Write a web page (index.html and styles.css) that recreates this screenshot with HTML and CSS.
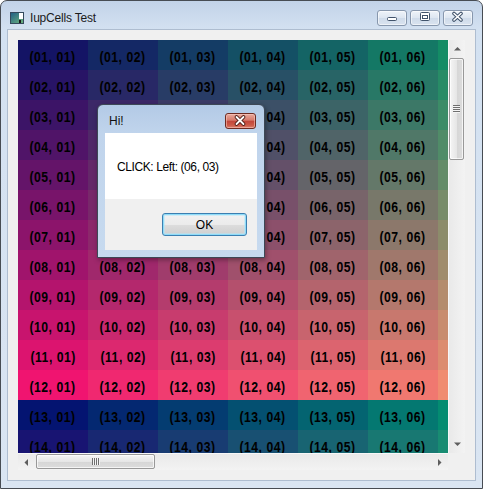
FILE: index.html
```html
<!DOCTYPE html>
<html>
<head>
<meta charset="utf-8">
<link rel="stylesheet" href="styles.css">
</head>
<body>
<div class="window">
  <div class="titlebar">
    <svg class="appicon" width="14" height="12" viewBox="0 0 14 12">
      <defs>
        <linearGradient id="ig" x1="0" y1="0" x2="1" y2="1">
          <stop offset="0" stop-color="#1f5d86"/>
          <stop offset="1" stop-color="#6fb67c"/>
        </linearGradient>
      </defs>
      <rect x="0.5" y="0.5" width="13" height="11" fill="url(#ig)" stroke="#34495c"/>
      <rect x="9" y="1" width="4" height="6" fill="#ffffff"/>
      <rect x="9" y="8" width="2" height="3" fill="#1a1a1a"/>
    </svg>
    <span class="title">IupCells Test</span>
    <div class="caption-buttons">
      <div class="cbtn">
        <svg width="28" height="14" viewBox="0 0 28 14"><rect x="9.5" y="6.5" width="9" height="3" rx="1" fill="#fff" stroke="#41536b"/></svg>
      </div>
      <div class="cbtn">
        <svg width="28" height="14" viewBox="0 0 28 14"><rect x="9.5" y="1.5" width="9" height="8" rx="1" fill="#fff" stroke="#41536b"/><rect x="11.5" y="4.5" width="5" height="3" fill="none" stroke="#41536b"/></svg>
      </div>
      <div class="cbtn">
        <svg width="28" height="14" viewBox="0 0 28 14"><path d="M10 2.5 L17 9 M17 2.5 L10 9" stroke="#41536b" stroke-width="3.6" stroke-linecap="round"/><path d="M10 2.5 L17 9 M17 2.5 L10 9" stroke="#fff" stroke-width="1.6" stroke-linecap="round"/></svg>
      </div>
    </div>
  </div>
  <div class="client">
    <div class="cells">
      <div class="grid-view">
        <div class="row r1"><div class="cell c1"><span>(01, 01)</span></div><div class="cell c2"><span>(01, 02)</span></div><div class="cell c3"><span>(01, 03)</span></div><div class="cell c4"><span>(01, 04)</span></div><div class="cell c5"><span>(01, 05)</span></div><div class="cell c6"><span>(01, 06)</span></div><div class="cell c7"><span>(01, 07)</span></div></div>
        <div class="row r2"><div class="cell c1"><span>(02, 01)</span></div><div class="cell c2"><span>(02, 02)</span></div><div class="cell c3"><span>(02, 03)</span></div><div class="cell c4"><span>(02, 04)</span></div><div class="cell c5"><span>(02, 05)</span></div><div class="cell c6"><span>(02, 06)</span></div><div class="cell c7"><span>(02, 07)</span></div></div>
        <div class="row r3"><div class="cell c1"><span>(03, 01)</span></div><div class="cell c2"><span>(03, 02)</span></div><div class="cell c3"><span>(03, 03)</span></div><div class="cell c4"><span>(03, 04)</span></div><div class="cell c5"><span>(03, 05)</span></div><div class="cell c6"><span>(03, 06)</span></div><div class="cell c7"><span>(03, 07)</span></div></div>
        <div class="row r4"><div class="cell c1"><span>(04, 01)</span></div><div class="cell c2"><span>(04, 02)</span></div><div class="cell c3"><span>(04, 03)</span></div><div class="cell c4"><span>(04, 04)</span></div><div class="cell c5"><span>(04, 05)</span></div><div class="cell c6"><span>(04, 06)</span></div><div class="cell c7"><span>(04, 07)</span></div></div>
        <div class="row r5"><div class="cell c1"><span>(05, 01)</span></div><div class="cell c2"><span>(05, 02)</span></div><div class="cell c3"><span>(05, 03)</span></div><div class="cell c4"><span>(05, 04)</span></div><div class="cell c5"><span>(05, 05)</span></div><div class="cell c6"><span>(05, 06)</span></div><div class="cell c7"><span>(05, 07)</span></div></div>
        <div class="row r6"><div class="cell c1"><span>(06, 01)</span></div><div class="cell c2"><span>(06, 02)</span></div><div class="cell c3"><span>(06, 03)</span></div><div class="cell c4"><span>(06, 04)</span></div><div class="cell c5"><span>(06, 05)</span></div><div class="cell c6"><span>(06, 06)</span></div><div class="cell c7"><span>(06, 07)</span></div></div>
        <div class="row r7"><div class="cell c1"><span>(07, 01)</span></div><div class="cell c2"><span>(07, 02)</span></div><div class="cell c3"><span>(07, 03)</span></div><div class="cell c4"><span>(07, 04)</span></div><div class="cell c5"><span>(07, 05)</span></div><div class="cell c6"><span>(07, 06)</span></div><div class="cell c7"><span>(07, 07)</span></div></div>
        <div class="row r8"><div class="cell c1"><span>(08, 01)</span></div><div class="cell c2"><span>(08, 02)</span></div><div class="cell c3"><span>(08, 03)</span></div><div class="cell c4"><span>(08, 04)</span></div><div class="cell c5"><span>(08, 05)</span></div><div class="cell c6"><span>(08, 06)</span></div><div class="cell c7"><span>(08, 07)</span></div></div>
        <div class="row r9"><div class="cell c1"><span>(09, 01)</span></div><div class="cell c2"><span>(09, 02)</span></div><div class="cell c3"><span>(09, 03)</span></div><div class="cell c4"><span>(09, 04)</span></div><div class="cell c5"><span>(09, 05)</span></div><div class="cell c6"><span>(09, 06)</span></div><div class="cell c7"><span>(09, 07)</span></div></div>
        <div class="row r10"><div class="cell c1"><span>(10, 01)</span></div><div class="cell c2"><span>(10, 02)</span></div><div class="cell c3"><span>(10, 03)</span></div><div class="cell c4"><span>(10, 04)</span></div><div class="cell c5"><span>(10, 05)</span></div><div class="cell c6"><span>(10, 06)</span></div><div class="cell c7"><span>(10, 07)</span></div></div>
        <div class="row r11"><div class="cell c1"><span>(11, 01)</span></div><div class="cell c2"><span>(11, 02)</span></div><div class="cell c3"><span>(11, 03)</span></div><div class="cell c4"><span>(11, 04)</span></div><div class="cell c5"><span>(11, 05)</span></div><div class="cell c6"><span>(11, 06)</span></div><div class="cell c7"><span>(11, 07)</span></div></div>
        <div class="row r12"><div class="cell c1"><span>(12, 01)</span></div><div class="cell c2"><span>(12, 02)</span></div><div class="cell c3"><span>(12, 03)</span></div><div class="cell c4"><span>(12, 04)</span></div><div class="cell c5"><span>(12, 05)</span></div><div class="cell c6"><span>(12, 06)</span></div><div class="cell c7"><span>(12, 07)</span></div></div>
        <div class="row r13"><div class="cell c1"><span>(13, 01)</span></div><div class="cell c2"><span>(13, 02)</span></div><div class="cell c3"><span>(13, 03)</span></div><div class="cell c4"><span>(13, 04)</span></div><div class="cell c5"><span>(13, 05)</span></div><div class="cell c6"><span>(13, 06)</span></div><div class="cell c7"><span>(13, 07)</span></div></div>
        <div class="row r14"><div class="cell c1"><span>(14, 01)</span></div><div class="cell c2"><span>(14, 02)</span></div><div class="cell c3"><span>(14, 03)</span></div><div class="cell c4"><span>(14, 04)</span></div><div class="cell c5"><span>(14, 05)</span></div><div class="cell c6"><span>(14, 06)</span></div><div class="cell c7"><span>(14, 07)</span></div></div>
      </div>
      <div class="vscroll">
        <div class="sarrow"><svg width="17" height="17" viewBox="0 0 17 17"><polygon points="5,10.5 12,10.5 8.5,7" fill="#5e5e5e"/></svg></div>
        <div class="vthumb"><span class="grip-v"></span></div>
        <div class="strack"></div>
        <div class="sarrow"><svg width="17" height="17" viewBox="0 0 17 17"><polygon points="5,6.5 12,6.5 8.5,10" fill="#5e5e5e"/></svg></div>
      </div>
      <div class="hscroll">
        <div class="sarrow"><svg width="17" height="17" viewBox="0 0 17 17"><polygon points="10,5 10,12 6.5,8.5" fill="#5e5e5e"/></svg></div>
        <div class="hthumb"><span class="grip-h"></span></div>
        <div class="strack"></div>
        <div class="sarrow"><svg width="17" height="17" viewBox="0 0 17 17"><polygon points="7,5 7,12 10.5,8.5" fill="#5e5e5e"/></svg></div>
      </div>
      <div class="corner"></div>
    </div>
  </div>

  <div class="dialog">
    <div class="dtitlebar">
      <span class="dtitle">Hi!</span>
      <div class="dclose">
        <svg width="29" height="14" viewBox="0 0 29 14"><path d="M10.5 3 L17.5 10 M17.5 3 L10.5 10" stroke="#4a1a14" stroke-width="3.8" stroke-linecap="round"/><path d="M10.5 3 L17.5 10 M17.5 3 L10.5 10" stroke="#fff" stroke-width="1.8" stroke-linecap="round"/></svg>
      </div>
    </div>
    <div class="dclient">
      <div class="dmessage">CLICK: Left: (06, 03)</div>
      <div class="dfooter">
        <div class="okbtn">OK</div>
      </div>
    </div>
  </div>
</div>
</body>
</html>
```
FILE: styles.css
```css
* {
  box-sizing: border-box;
  margin: 0;
  padding: 0;
}

html, body {
  width: 483px;
  height: 489px;
  overflow: hidden;
  background: #ffffff;
}

body {
  font-family: "Liberation Sans", Arial, sans-serif;
}

.window {
  position: relative;
  width: 483px;
  height: 489px;
  border: 1px solid #474c53;
  border-radius: 7px 7px 0 0;
  background: linear-gradient(#c2d3e8, #d3e1f1 28px, #dae5f2);
  padding: 0 6px 7px;
  display: flex;
  flex-direction: column;
}

.titlebar {
  height: 28px;
  flex: none;
  display: flex;
  align-items: center;
  padding: 6px 3px 0 3px;
}

.appicon {
  flex: none;
  display: block;
}

.title {
  margin-left: 6px;
  font-size: 12px;
  letter-spacing: -0.2px;
  color: #1b1b1b;
}

.caption-buttons {
  margin-left: auto;
  display: flex;
  gap: 3px;
}

.cbtn {
  width: 30px;
  height: 16px;
  border: 1px solid #8797ad;
  border-radius: 3px;
  background: linear-gradient(#eef3f9, #dde6f1 50%, #cfdbea 51%, #d9e3ef);
  box-shadow: inset 0 0 0 1px rgba(255, 255, 255, 0.55);
}

.cbtn svg {
  display: block;
}

.client {
  flex: 1;
  background: #f0f0f0;
  border: 1px solid #aebdd0;
  padding: 10px;
}

.cells {
  display: grid;
  grid-template-columns: 430px 17px;
  grid-template-rows: 413px 17px;
  width: 447px;
  height: 430px;
}

.grid-view {
  overflow: hidden;
  display: flex;
  flex-direction: column;
}

.row {
  display: flex;
  flex: none;
  height: 30px;
}

.cell {
  flex: none;
  width: 70px;
  height: 30px;
  display: flex;
  align-items: center;
  justify-content: center;
  padding-top: 3px;
  font-weight: bold;
  font-size: 14px;
  letter-spacing: 0.6px;
  color: #000;
  white-space: nowrap;
  background: rgb(var(--r), var(--g), var(--b));
}

.cell span {
  display: inline-block;
  transform: scaleX(0.87);
}

.r1 { --r: 20; --b: 101; }
.r2 { --r: 40; --b: 102; }
.r3 { --r: 60; --b: 103; }
.r4 { --r: 80; --b: 104; }
.r5 { --r: 100; --b: 105; }
.r6 { --r: 120; --b: 106; }
.r7 { --r: 140; --b: 107; }
.r8 { --r: 160; --b: 108; }
.r9 { --r: 180; --b: 109; }
.r10 { --r: 200; --b: 110; }
.r11 { --r: 220; --b: 111; }
.r12 { --r: 240; --b: 112; }
.r13 { --r: 4; --b: 113; }
.r14 { --r: 24; --b: 114; }

.c1 { --g: 20; }
.c2 { --g: 40; }
.c3 { --g: 60; }
.c4 { --g: 80; }
.c5 { --g: 100; }
.c6 { --g: 120; }
.c7 { --g: 140; }

.vscroll {
  display: flex;
  flex-direction: column;
  background: linear-gradient(to right, #e9e9e9, #f3f3f3);
  border-left: 1px solid #f7f7f7;
}

.hscroll {
  display: flex;
  flex-direction: row;
  background: linear-gradient(#e9e9e9, #f3f3f3);
  border-top: 1px solid #f7f7f7;
}

.sarrow {
  flex: none;
  width: 17px;
  height: 17px;
}

.vscroll .sarrow {
  width: 16px;
}

.hscroll .sarrow {
  height: 16px;
}

.sarrow svg {
  display: block;
}

.strack {
  flex: 1;
}

.vthumb {
  flex: none;
  height: 102px;
  width: 15px;
  margin: 1px 0 0 0;
  border: 1px solid #989898;
  border-radius: 2px;
  background: linear-gradient(to right, #f5f5f5, #e6e6e6 50%, #d6d6d6 51%, #dcdcdc);
  box-shadow: inset 0 0 0 1px rgba(255, 255, 255, 0.7);
  display: flex;
  align-items: center;
  justify-content: center;
}

.hthumb {
  flex: none;
  width: 119px;
  height: 15px;
  margin: 0 0 0 1px;
  border: 1px solid #989898;
  border-radius: 2px;
  background: linear-gradient(#f5f5f5, #e6e6e6 50%, #d6d6d6 51%, #dcdcdc);
  box-shadow: inset 0 0 0 1px rgba(255, 255, 255, 0.7);
  display: flex;
  align-items: center;
  justify-content: center;
}

.grip-v {
  display: block;
  width: 7px;
  height: 8px;
  background: repeating-linear-gradient(#6f6f6f 0 1px, #f4f4f4 1px 2px);
}

.grip-h {
  display: block;
  width: 8px;
  height: 7px;
  background: repeating-linear-gradient(to right, #6f6f6f 0 1px, #f4f4f4 1px 2px);
}

.corner {
  background: #f0f0f0;
}

.dialog {
  position: absolute;
  left: 96px;
  top: 103px;
  width: 168px;
  height: 154px;
  border: 1px solid #3d4856;
  border-radius: 6px 6px 0 0;
  background: linear-gradient(#b3cae6, #c0d4ec 28px, #c7daef);
  box-shadow: 1px 2px 5px rgba(0, 0, 0, 0.35);
  padding: 0 7px 7px;
  display: flex;
  flex-direction: column;
}

.dtitlebar {
  height: 28px;
  flex: none;
  display: flex;
  align-items: center;
  padding: 4px 1px 0 4px;
}

.dtitle {
  font-size: 12px;
  color: #111;
}

.dclose {
  margin-left: auto;
  width: 31px;
  height: 16px;
  border: 1px solid #6e2b22;
  border-radius: 3px;
  background: linear-gradient(#e8aa9e, #d77a6b 45%, #c2453a 50%, #cc5a48 80%, #d88070);
  box-shadow: inset 0 0 0 1px rgba(255, 210, 200, 0.5);
}

.dclose svg {
  display: block;
}

.dclient {
  flex: 1;
  display: flex;
  flex-direction: column;
  background: #f0f0f0;
}

.dmessage {
  height: 66px;
  flex: none;
  background: #ffffff;
  display: flex;
  align-items: center;
  padding: 2px 0 0 12px;
  font-size: 12px;
  letter-spacing: -0.4px;
  color: #000;
}

.dfooter {
  flex: 1;
  display: flex;
  align-items: center;
  justify-content: flex-end;
  padding-right: 10px;
}

.okbtn {
  width: 85px;
  height: 23px;
  border: 1px solid #3c7fb1;
  border-radius: 3px;
  background: linear-gradient(#f2f2f2, #ebebeb 50%, #dddddd 51%, #cfcfcf);
  box-shadow: inset 0 0 0 1px #8fdcf8, inset 0 0 0 2px rgba(180, 230, 250, 0.5);
  display: flex;
  align-items: center;
  justify-content: center;
  font-size: 12px;
  color: #000;
}
```
